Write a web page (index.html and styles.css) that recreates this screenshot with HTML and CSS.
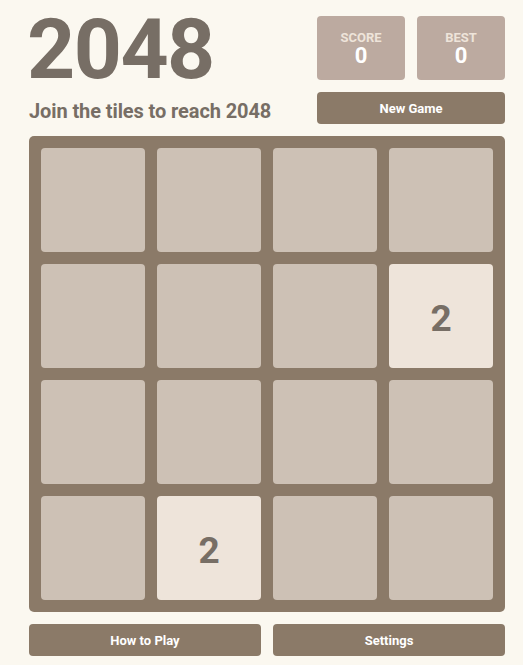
FILE: index.html
```html
<!DOCTYPE html>
<html lang="en">
  <head>
    <meta charset="UTF-8" />
    <meta name="viewport" content="width=device-width, initial-scale=1.0" />
    <title>2048</title>
    <link rel="stylesheet" href="styles.css">
  </head>
  <body>
    <div class="game">
      <header class="header">
        <div class="intro">
          <h1 class="title">2048</h1>
          <p class="subtitle">Join the tiles to reach 2048</p>
        </div>
        <div class="controls">
          <div class="scores">
            <div class="score-box">
              <span class="score-label">SCORE</span>
              <span class="score-value">0</span>
            </div>
            <div class="score-box">
              <span class="score-label">BEST</span>
              <span class="score-value">0</span>
            </div>
          </div>
          <button class="btn">New Game</button>
        </div>
      </header>

      <div class="board">
        <div class="tile"></div>
        <div class="tile"></div>
        <div class="tile"></div>
        <div class="tile"></div>

        <div class="tile"></div>
        <div class="tile"></div>
        <div class="tile"></div>
        <div class="tile tile-2">2</div>

        <div class="tile"></div>
        <div class="tile"></div>
        <div class="tile"></div>
        <div class="tile"></div>

        <div class="tile"></div>
        <div class="tile tile-2">2</div>
        <div class="tile"></div>
        <div class="tile"></div>
      </div>

      <div class="actions">
        <button class="btn">How to Play</button>
        <button class="btn">Settings</button>
      </div>
    </div>
  </body>
</html>
```

FILE: styles.css
```css
/* Reset */
* {
  margin: 0;
  padding: 0;
  box-sizing: border-box;
}

body {
  background-color: #fbf8f0;
  font-family: Roboto, "Liberation Sans", sans-serif;
  color: #776e65;
}

.game {
  width: 476px;
  margin-left: 29px;
}

/* Header */
.header {
  height: 124px;
  display: flex;
  align-items: flex-start;
  justify-content: space-between;
}

.intro {
  display: flex;
  flex-direction: column;
}

.title {
  font-size: 84px;
  font-weight: 700;
  line-height: normal;
  letter-spacing: -1.5px;
  margin-left: -2px;
  color: #776e65;
}

.subtitle {
  margin-top: -4px;
  font-size: 20px;
  font-weight: 700;
  line-height: 32px;
  letter-spacing: -0.1px;
}

.controls {
  width: 188px;
  padding-top: 16px;
  display: flex;
  flex-direction: column;
  gap: 12px;
}

.scores {
  display: flex;
  gap: 12px;
}

.score-box {
  flex: 1;
  height: 64px;
  background-color: #bcaaa0;
  border-radius: 4px;
  display: flex;
  flex-direction: column;
  align-items: center;
  justify-content: center;
  padding-top: 2px;
}

.score-label {
  font-size: 13px;
  font-weight: 700;
  line-height: 14px;
  color: #eee4da;
}

.score-value {
  font-size: 22px;
  font-weight: 700;
  line-height: 22px;
  color: #fff;
}

.btn {
  height: 32px;
  border: none;
  border-radius: 4px;
  background-color: #8b7a68;
  color: #fff;
  font-family: Roboto, "Liberation Sans", sans-serif;
  font-size: 13px;
  font-weight: 700;
  cursor: pointer;
}

/* Board */
.board {
  margin-top: 12px;
  padding: 12px;
  background-color: #8b7a68;
  border-radius: 5px;
  display: grid;
  grid-template-columns: repeat(4, 104px);
  grid-auto-rows: 104px;
  gap: 12px;
}

.tile {
  background-color: #cdc1b5;
  border-radius: 4px;
  display: flex;
  align-items: center;
  justify-content: center;
  padding-top: 4px;
  font-size: 37px;
  font-weight: 700;
  color: #776e65;
}

.tile-2 {
  background-color: #eee4da;
}

/* Bottom buttons */
.actions {
  margin-top: 12px;
  display: grid;
  grid-template-columns: 1fr 1fr;
  gap: 12px;
}
```
